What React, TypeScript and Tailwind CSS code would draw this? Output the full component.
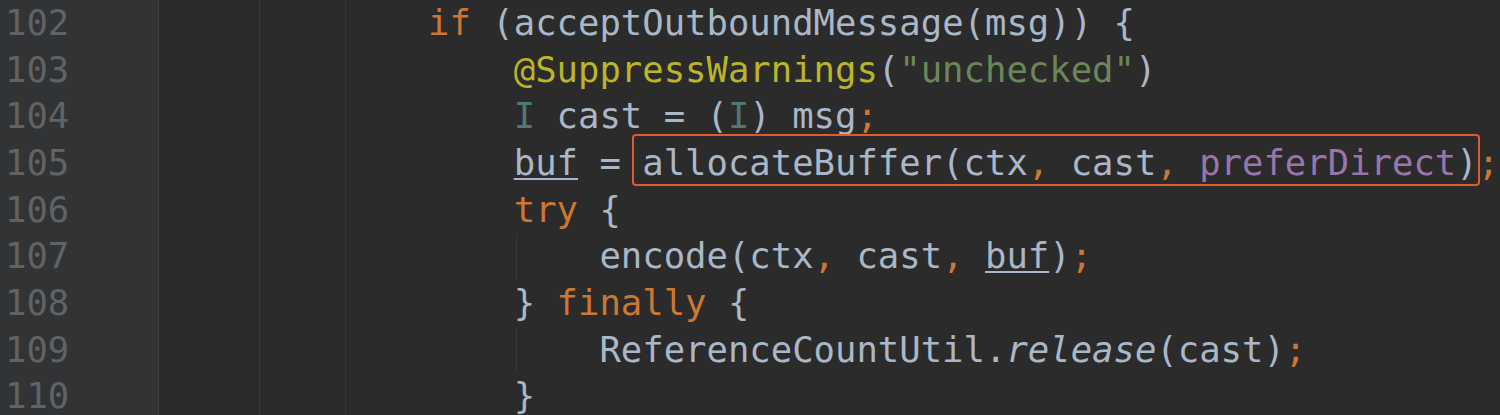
import React from "react";

const K = "text-[#cc7832]";
const A = "text-[#bbb529]";
const S = "text-[#6a8759]";
const T = "text-[#507874]";
const F = "text-[#9876aa]";
const U = "underline decoration-2 underline-offset-[3px]";

const lines: React.ReactNode[] = [
  <>
    {"            "}
    <span className={K}>if</span>
    {" (acceptOutboundMessage(msg)) {"}
  </>,
  <>
    {"                "}
    <span className={A}>@SuppressWarnings</span>
    {"("}
    <span className={S}>"unchecked"</span>
    {")"}
  </>,
  <>
    {"                "}
    <span className={T}>I</span>
    {" cast = ("}
    <span className={T}>I</span>
    {") msg"}
    <span className={K}>;</span>
  </>,
  <>
    {"                "}
    <span className={U}>buf</span>
    {" = allocateBuffer(ctx"}
    <span className={K}>,</span>
    {" cast"}
    <span className={K}>,</span>
    {" "}
    <span className={F}>preferDirect</span>
    {")"}
    <span className={K}>;</span>
  </>,
  <>
    {"                "}
    <span className={K}>try</span>
    {" {"}
  </>,
  <>
    {"                    encode(ctx"}
    <span className={K}>,</span>
    {" cast"}
    <span className={K}>,</span>
    {" "}
    <span className={U}>buf</span>
    {")"}
    <span className={K}>;</span>
  </>,
  <>
    {"                } "}
    <span className={K}>finally</span>
    {" {"}
  </>,
  <>
    {"                    ReferenceCountUtil."}
    <span className="italic">release</span>
    {"(cast)"}
    <span className={K}>;</span>
  </>,
  <>{"                }"}</>,
];

export default function App() {
  return (
    <div className="relative flex h-[415px] w-[1500px] overflow-hidden bg-[#2b2b2b] font-['DejaVu_Sans_Mono',Menlo,monospace] text-[35.6px] leading-[46.67px] text-[#a9b7c6]">
      <div className="w-[158px] shrink-0 bg-[#313335] pl-[5px] text-[#606366]">
        {lines.map((_, i) => (
          <div key={i} className="h-[46.67px] whitespace-pre">
            {102 + i}
          </div>
        ))}
      </div>
      <div className="w-px shrink-0 bg-[#3e4042]" />
      <div className="relative flex-1 pl-[12px]">
        <div className="absolute left-[100px] top-0 h-full w-px bg-[#383838]" />
        <div className="absolute left-[186px] top-0 h-full w-px bg-[#383838]" />
        <div className="absolute left-[357px] top-[233.3px] h-[46.67px] w-px bg-[#383838]" />
        <div className="absolute left-[357px] top-[326.7px] h-[46.67px] w-px bg-[#383838]" />
        {lines.map((l, i) => (
          <div key={i} className="relative h-[46.67px] whitespace-pre">
            {l}
          </div>
        ))}
      </div>
      <div className="absolute left-[632px] top-[134px] h-[52px] w-[848px] rounded-[4px] border-2 border-[#e25a30]" />
    </div>
  );
}
